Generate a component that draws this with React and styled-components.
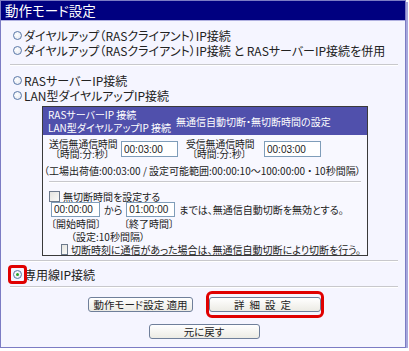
import styled, { createGlobalStyle, css } from "styled-components";

const Global = createGlobalStyle`
  html, body { margin: 0; padding: 0; background: #ffffff; }
  body {
    font-family: "Noto Sans CJK JP", "Noto Sans", sans-serif;
    font-feature-settings: "palt" 1;
    color: #222;
  }
`;

const Panel = styled.div`
  width: 404px;
  height: 346px;
  border: 1px solid #7c7cc4;
  box-shadow: 2px 2px 0 #a6a6dc;
  background: #f5f5ff;
  display: flex;
  flex-direction: column;
`;

const Title = styled.div`
  height: 19px;
  line-height: 19px;
  background: #000080;
  color: #fff;
  font-size: 13.5px;
  padding-left: 4px;
  border-bottom: 1px solid #b0b0e0;
`;

const Body = styled.div`
  padding: 7px 7px 0 9px;
  display: flex;
  flex-direction: column;
`;

const Option = styled.label`
  position: relative;
  display: flex;
  align-items: center;
  gap: 2px;
  height: 15px;
  padding-left: 3px;
  font-size: 12px;
  white-space: nowrap;
`;

const Radio = styled.span`
  box-sizing: border-box;
  width: 9px;
  height: 9px;
  border-radius: 50%;
  border: 1px solid #5a78a8;
  background: radial-gradient(circle at 40% 40%, #ffffff, #dfe3ee);
  display: flex;
  align-items: center;
  justify-content: center;
  ${({ checked }) =>
    checked &&
    css`
      &::after {
        content: "";
        width: 3px;
        height: 3px;
        border-radius: 50%;
        background: #2aa02a;
      }
    `}
`;

const Mark = styled.span`
  position: absolute;
  box-sizing: border-box;
  left: -2px;
  top: -2px;
  width: 19px;
  height: 19px;
  border: 3px solid #e00000;
  border-radius: 4px;
`;

const Rule = styled.div`
  height: 0;
  border-top: 1px solid #c8c8cc;
  border-bottom: 1px solid #ffffff;
  margin: ${({ m }) => m || "6px 0"};
`;

const Box = styled.div`
  margin: 3px 0 0 32px;
  width: 324px;
  border: 1px solid #3a3a3a;
  background: #f8f8ff;
  font-size: 10px;
`;

const BoxHead = styled.div`
  background: #5050ac;
  color: #fff;
  height: 28px;
  display: flex;
  align-items: center;
  padding-left: 5px;
  line-height: 13px;
`;

const HeadLeft = styled.div`
  width: 128px;
`;

const BoxBody = styled.div`
  padding: 3px 6px 0 6px;
  display: flex;
  flex-direction: column;
`;

const Line = styled.div`
  display: flex;
  flex-shrink: 0;
  align-items: center;
  white-space: nowrap;
  gap: ${({ gap }) => gap || "4px"};
  padding-left: ${({ indent }) => indent || "0"};
  margin-top: ${({ mt }) => mt || "0"};
  height: ${({ h }) => h || "13px"};
`;

const Label = styled.div`
  display: flex;
  flex-direction: column;
  font-size: 9.8px;
  line-height: 10px;
  width: ${({ w }) => w || "auto"};
`;

const Sub = styled.span`
  padding-left: 6px;
`;

const TimeInput = styled.input`
  box-sizing: border-box;
  width: ${({ w }) => w || "57px"};
  height: ${({ h }) => h || "16px"};
  border: 1px solid #7f9db9;
  background: #fff;
  font-family: "Liberation Sans", sans-serif;
  font-size: 10px;
  padding: 0 2px;
  color: #222;
`;

const Check = styled.span`
  box-sizing: border-box;
  width: 11px;
  height: 11px;
  border: 1px solid #6d7a8c;
  background: linear-gradient(135deg, #e4e4e0, #fafaf8);
  margin-right: 3px;
`;

const Buttons = styled.div`
  display: flex;
  flex-direction: column;
  align-items: center;
  gap: 6px;
`;

const ButtonRow = styled.div`
  display: flex;
  align-items: center;
  gap: 13px;
  padding-left: 4px;
`;

const Button = styled.button`
  box-sizing: border-box;
  width: ${({ w }) => w};
  height: 15px;
  padding: 0;
  border: 1px solid #6f7f9a;
  border-radius: 3px;
  background: linear-gradient(#ffffff, #ecebe4);
  font-family: "Noto Sans CJK JP", sans-serif;
  font-feature-settings: "palt" 1;
  font-size: 10.5px;
  line-height: 13px;
  color: #222;
  letter-spacing: ${({ spaced }) => (spaced ? "5px" : "0")};
`;

const Frame = styled.div`
  border: 3px solid #e00000;
  border-radius: 6px;
  padding: 3px 0;
  display: flex;
`;

export default function App() {
  return (
    <>
      <Global />
      <Panel>
        <Title>動作モード設定</Title>
        <Body>
          <Option>
            <Radio />
            ダイヤルアップ（RASクライアント）IP接続
          </Option>
          <Option>
            <Radio />
            ダイヤルアップ（RASクライアント）IP接続 と RASサーバーIP接続を併用
          </Option>
          <Rule m="6px 0 7px 0" />
          <Option>
            <Radio />
            RASサーバーIP接続
          </Option>
          <Option>
            <Radio />
            LAN型ダイヤルアップIP接続
          </Option>
          <Box>
            <BoxHead>
              <HeadLeft>
                RASサーバーIP 接続
                <br />
                LAN型ダイヤルアップIP 接続
              </HeadLeft>
              <span>無通信自動切断・無切断時間の設定</span>
            </BoxHead>
            <BoxBody>
              <Line h="22px">
                <Label w="68px">
                  <span>送信無通信時間</span>
                  <Sub>〔時間:分:秒〕</Sub>
                </Label>
                <TimeInput defaultValue="00:03:00" />
                <Label w="74px" style={{ marginLeft: "4px" }}>
                  <span>受信無通信時間</span>
                  <Sub>〔時間:分:秒〕</Sub>
                </Label>
                <TimeInput defaultValue="00:03:00" />
              </Line>
              <Line mt="4px" style={{ marginLeft: "-5px" }}>
                （工場出荷値:00:03:00 / 設定可能範囲:00:00:10～100:00:00 ・ 10秒間隔）
              </Line>
              <Rule m="4px 0 7px 0" />
              <Line h="12px" gap="0">
                <Check />
                無切断時間を設定する
              </Line>
              <Line h="15px" indent="2px">
                <TimeInput w="49px" h="15px" defaultValue="00:00:00" />
                から
                <TimeInput w="49px" h="15px" defaultValue="01:00:00" />
                までは、無通信自動切断を無効とする。
              </Line>
              <Line indent="2px" gap="23px">
                <span>〔開始時間〕</span>
                <span>〔終了時間〕</span>
              </Line>
              <Line indent="22px">（設定:10秒間隔）</Line>
              <Line h="12px" indent="12px" gap="0">
                <Check />
                切断時刻に通信があった場合は、無通信自動切断により切断を行う。
              </Line>
            </BoxBody>
          </Box>
          <Rule m="4px 0 5px 0" />
          <Option>
            <Radio checked />
            専用線IP接続
            <Mark />
          </Option>
          <Rule m="4px 0 3px 0" />
          <Buttons>
            <ButtonRow>
              <Button w="105px">動作モード設定 適用</Button>
              <Frame>
                <Button w="112px" spaced>
                  詳細設定
                </Button>
              </Frame>
            </ButtonRow>
            <Button w="111px">元に戻す</Button>
          </Buttons>
        </Body>
      </Panel>
    </>
  );
}
